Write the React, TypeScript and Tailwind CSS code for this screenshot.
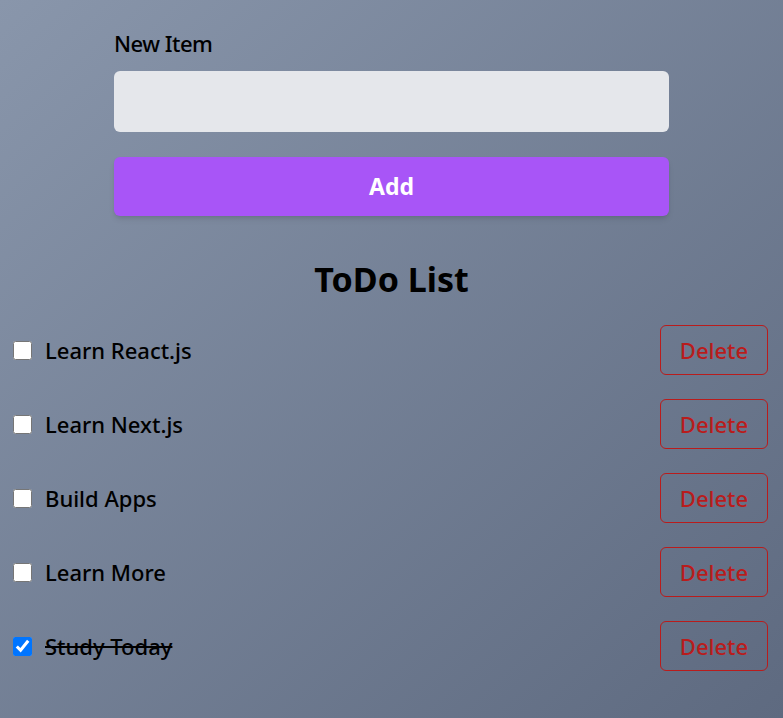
import React, { useState } from "react";

const initial = [
  { id: 1, text: "Learn React.js", done: false },
  { id: 2, text: "Learn Next.js", done: false },
  { id: 3, text: "Build Apps", done: false },
  { id: 4, text: "Learn More", done: false },
  { id: 5, text: "Study Today", done: true },
];

export default function App() {
  const [items, setItems] = useState(initial);
  const [value, setValue] = useState("");
  return (
    <div
      className="min-h-screen w-full bg-gradient-to-br from-[#8996ab] to-[#5e6a80] pt-[28px] pb-[47px] text-black"
      style={{ fontFamily: '"Noto Sans", "Open Sans", sans-serif' }}
    >
      <div className="mx-auto w-[555px] flex flex-col">
        <label className="text-[22px] leading-[30px] font-medium mb-[13px] -tracking-[0.5px]">New Item</label>
        <input
          value={value}
          onChange={(e) => setValue(e.target.value)}
          className="h-[61px] w-full rounded-md bg-gray-200 px-3 outline-none"
        />
        <button
          onClick={() => {
            if (value.trim()) {
              setItems([...items, { id: Date.now(), text: value, done: false }]);
              setValue("");
            }
          }}
          className="mt-[25px] h-[59px] w-full rounded-md bg-[#a855f7] text-white text-[23px] font-bold shadow-md"
        >
          Add
        </button>
      </div>
      <h1 className="mt-[43px] text-center text-[34px] leading-[40px] font-bold">ToDo List</h1>
      <ul className="mt-[26px] flex flex-col gap-[24px] px-[13px] pr-[15px]">
        {items.map((it) => (
          <li key={it.id} className="flex items-center justify-between h-[50px]">
            <div className="flex items-center gap-[13px]">
              <input
                type="checkbox"
                checked={it.done}
                onChange={() =>
                  setItems(items.map((x) => (x.id === it.id ? { ...x, done: !x.done } : x)))
                }
                className="w-[19px] h-[19px] m-0"
              />
              <span className={"text-[22px] leading-[30px] font-medium " + (it.done ? "line-through" : "")}>
                {it.text}
              </span>
            </div>
            <button
              onClick={() => setItems(items.filter((x) => x.id !== it.id))}
              className="h-[50px] w-[108px] rounded-md border border-[#b91c1c] text-[#b91c1c] text-[22px] font-medium"
            >
              Delete
            </button>
          </li>
        ))}
      </ul>
    </div>
  );
}
